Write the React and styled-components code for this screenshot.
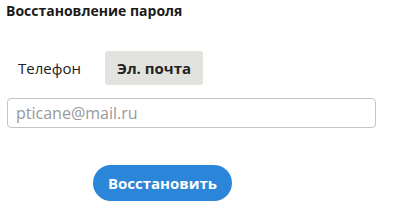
import styled, { createGlobalStyle } from 'styled-components';

const Global = createGlobalStyle`
  body {
    margin: 0;
    background: #fff;
    font-family: 'Open Sans', 'Liberation Sans', sans-serif;
  }
`;

const Wrapper = styled.div`
  padding: 1px 32px 0 6px;
  width: 408px;
  box-sizing: border-box;
`;

const Title = styled.h3`
  margin: 0;
  font-size: 14px;
  font-weight: 700;
  color: #1a1a1a;
  line-height: 20px;
`;

const Tabs = styled.div`
  display: flex;
  gap: 12px;
  margin-top: 30px;
`;

const Tab = styled.button`
  height: 34px;
  padding: 0 12px;
  border: none;
  border-radius: 3px;
  font-family: inherit;
  font-size: 15px;
  font-weight: ${(p) => (p.$active ? 700 : 400)};
  color: #222;
  background: ${(p) => (p.$active ? '#e2e2de' : 'transparent')};
  cursor: pointer;
`;

const Input = styled.input`
  display: block;
  margin: 13px 0 0 1px;
  width: 369px;
  height: 30px;
  box-sizing: border-box;
  padding: 0 8px;
  border: 1px solid #c4c4c4;
  border-radius: 4px;
  font-family: inherit;
  font-size: 16px;
  color: #333;
  &::placeholder {
    color: #999;
  }
`;

const Submit = styled.button`
  display: block;
  margin: 37px 0 0 87px;
  width: 139px;
  height: 36px;
  border: none;
  border-radius: 18px;
  background: #2b86d9;
  color: #fff;
  font-family: inherit;
  font-size: 15px;
  font-weight: 700;
  cursor: pointer;
`;

export default function App() {
  return (
    <>
      <Global />
      <Wrapper>
        <Title>Восстановление пароля</Title>
        <Tabs>
          <Tab>Телефон</Tab>
          <Tab $active>Эл. почта</Tab>
        </Tabs>
        <Input placeholder="pticane@mail.ru" />
        <Submit>Восстановить</Submit>
      </Wrapper>
    </>
  );
}
